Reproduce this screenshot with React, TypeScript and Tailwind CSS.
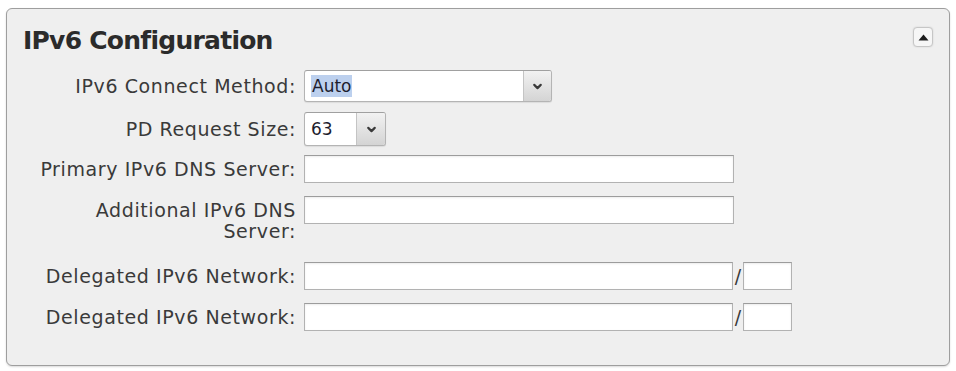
import { ChevronDown } from "lucide-react";

const font = { fontFamily: '"DejaVu Sans", Verdana, sans-serif' };

function Label({ children, className = "" }: { children: React.ReactNode; className?: string }) {
  return (
    <div className={`w-[297px] shrink-0 text-right text-[19px] leading-[20px] tracking-[0.6px] text-[#3a3a3a] pr-[8px] ${className}`}>
      {children}
    </div>
  );
}

function Select({ value, width, arrow, highlight }: { value: string; width: string; arrow: string; highlight?: boolean }) {
  return (
    <div className={`flex h-full ${width} rounded-[3px] border border-[#b4b4b4] border-t-[#a0a0a0] bg-white shadow-[0_1px_1px_rgba(0,0,0,0.08)] overflow-hidden`}>
      <div className="flex flex-1 items-center pl-[6px] text-[17px] text-[#1e1e2e]">
        <span className={highlight ? "bg-[#bcd0ee] px-[1px] leading-[22px]" : "leading-[22px]"}>{value}</span>
      </div>
      <div className={`flex ${arrow} items-center justify-center border-l border-[#c4c4c4] bg-gradient-to-b from-[#f2f2f2] to-[#d4d4d4]`}>
        <ChevronDown className="w-[13px] h-[13px] text-[#3a3a3a]" strokeWidth={4} />
      </div>
    </div>
  );
}

function TextBox({ width }: { width: string }) {
  return (
    <div className={`h-[28px] ${width} border border-[#b2b2b2] border-t-[#9c9c9c] bg-white shadow-[inset_0_1px_2px_rgba(0,0,0,0.08)]`} />
  );
}

export default function App() {
  return (
    <div className="w-[956px] h-[371px] bg-white pt-[8px] pl-[6px]" style={font}>
      <div className="w-[944px] h-[358px] rounded-[6px] border border-[#9e9e9e] bg-[#efefef] shadow-[0_1px_2px_rgba(0,0,0,0.15)]">
        <div className="flex items-start justify-between pt-[18px] pl-[16px] pr-[16px]">
          <h2 className="text-[25px] leading-[28px] font-bold tracking-[-0.03em] text-[#2b2b2b]">IPv6 Configuration</h2>
          <button className="flex h-[20px] w-[20px] items-center justify-center rounded-[4px] border border-[#c6c6c6] bg-[#f6f6f6] shadow-[0_0_2px_rgba(0,0,0,0.12)]">
            <svg width="11" height="7" viewBox="0 0 11 7">
              <path d="M5.5 0.5 L10.5 6.5 L0.5 6.5 Z" fill="#1c1c1c" />
            </svg>
          </button>
        </div>

        <div className="mt-[15px] flex h-[32px] items-center">
          <Label>IPv6 Connect Method:</Label>
          <Select value="Auto" width="w-[248px]" arrow="w-[28px]" highlight />
        </div>

        <div className="mt-[10px] flex h-[34px] items-center">
          <Label>PD Request Size:</Label>
          <Select value="63" width="w-[82px]" arrow="w-[29px]" />
        </div>

        <div className="mt-[9px] flex items-center">
          <Label>Primary IPv6 DNS Server:</Label>
          <TextBox width="w-[430px]" />
        </div>

        <div className="mt-[13px] flex items-start">
          <Label className="pt-[4px] leading-[21px]">
            Additional IPv6 DNS
            <br />
            Server:
          </Label>
          <TextBox width="w-[430px]" />
        </div>

        <div className="mt-[20px] flex items-center">
          <Label>Delegated IPv6 Network:</Label>
          <TextBox width="w-[429px]" />
          <span className="w-[10px] text-center text-[19px] leading-[20px] text-[#3a3a3a]">/</span>
          <TextBox width="w-[49px]" />
        </div>

        <div className="mt-[13px] flex items-center">
          <Label>Delegated IPv6 Network:</Label>
          <TextBox width="w-[429px]" />
          <span className="w-[10px] text-center text-[19px] leading-[20px] text-[#3a3a3a]">/</span>
          <TextBox width="w-[49px]" />
        </div>
      </div>
    </div>
  );
}
